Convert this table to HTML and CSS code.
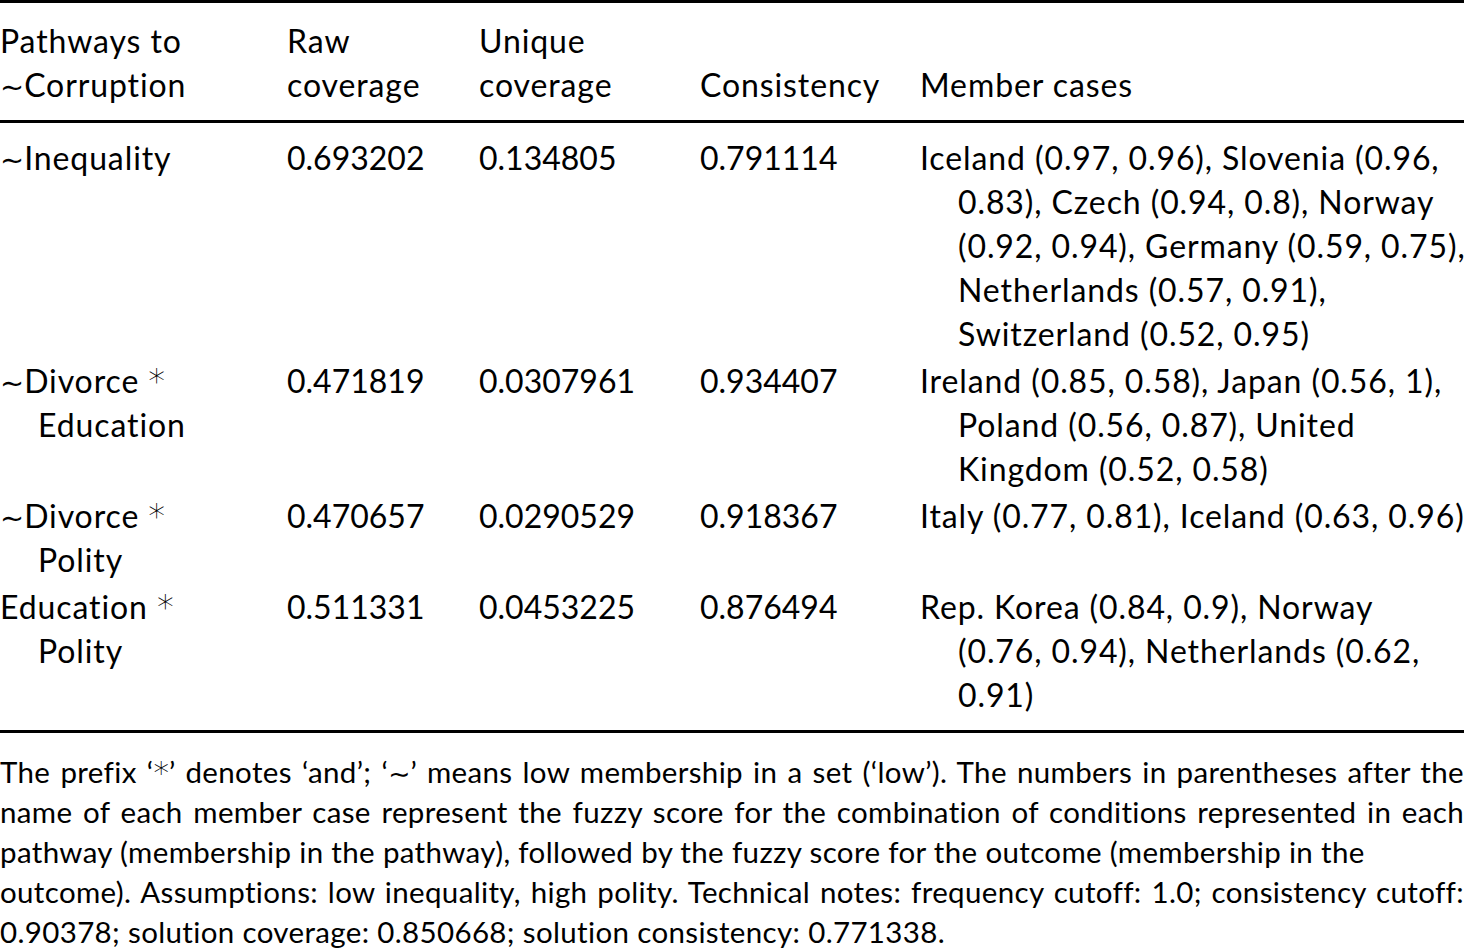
FILE: index.html
```html
<!DOCTYPE html>
<html lang="en">
<head>
<meta charset="utf-8">
<title>Pathways to ~Corruption</title>
<link rel="stylesheet" href="styles.css">
</head>
<body>
<div class="table-wrap">
  <table class="qca">
    <colgroup>
      <col class="c1"><col class="c2"><col class="c3"><col class="c4"><col class="c5">
    </colgroup>
    <thead>
      <tr>
        <th>Pathways to<br><span class="tl">∼</span>Corruption</th>
        <th>Raw<br>coverage</th>
        <th>Unique<br>coverage</th>
        <th>Consistency</th>
        <th>Member cases</th>
      </tr>
    </thead>
    <tbody>
      <tr>
        <td class="hang"><span class="tl">∼</span>Inequality</td>
        <td class="num">0.693202</td>
        <td class="num">0.134805</td>
        <td class="num">0.791114</td>
        <td class="hang cases">Iceland (0.97, 0.96), Slovenia (0.96,<br>0.83), Czech (0.94, 0.8), Norway<br>(0.92, 0.94), Germany (0.59, 0.75),<br>Netherlands (0.57, 0.91),<br>Switzerland (0.52, 0.95)</td>
      </tr>
      <tr>
        <td class="hang"><span class="tl">∼</span>Divorce <span class="ast">*</span><br>Education</td>
        <td class="num">0.471819</td>
        <td class="num">0.0307961</td>
        <td class="num">0.934407</td>
        <td class="hang cases">Ireland (0.85, 0.58), Japan (0.56, 1),<br>Poland (0.56, 0.87), United<br>Kingdom (0.52, 0.58)</td>
      </tr>
      <tr>
        <td class="hang"><span class="tl">∼</span>Divorce <span class="ast">*</span><br>Polity</td>
        <td class="num">0.470657</td>
        <td class="num">0.0290529</td>
        <td class="num">0.918367</td>
        <td class="hang cases">Italy (0.77, 0.81), Iceland (0.63, 0.96)</td>
      </tr>
      <tr>
        <td class="hang">Education <span class="ast">*</span><br>Polity</td>
        <td class="num">0.511331</td>
        <td class="num">0.0453225</td>
        <td class="num">0.876494</td>
        <td class="hang cases">Rep. Korea (0.84, 0.9), Norway<br>(0.76, 0.94), Netherlands (0.62,<br>0.91)</td>
      </tr>
    </tbody>
  </table>
  <p class="note">
    <span class="line full">The prefix ‘<span class="ast">*</span>’ denotes ‘and’; ‘<span class="tl">∼</span>’ means low membership in a set (‘low’). The numbers in parentheses after the</span>
    <span class="line full">name of each member case represent the fuzzy score for the combination of conditions represented in each</span>
    <span class="line">pathway (membership in the pathway), followed by the fuzzy score for the outcome (membership in the</span>
    <span class="line full">outcome). Assumptions: low inequality, high polity. Technical notes: frequency cutoff: 1.0; consistency cutoff:</span>
    <span class="line">0.90378; solution coverage: 0.850668; solution consistency: 0.771338.</span>
  </p>
</div>
</body>
</html>
```
FILE: styles.css
```css
html, body {
  margin: 0;
  padding: 0;
  background: #ffffff;
}
body {
  font-family: "Lato", "DejaVu Sans", sans-serif;
  font-size: 32px;
  color: #000000;
}
.table-wrap {
  width: 1464px;
}
.qca {
  width: 1464px;
  border-collapse: collapse;
  table-layout: fixed;
  border-top: 3px solid #000;
  border-bottom: 3px solid #000;
}
.c1 { width: 287px; }
.c2 { width: 192px; }
.c3 { width: 221px; }
.c4 { width: 220px; }
.c5 { width: 544px; }
.qca th,
.qca td {
  padding: 0;
  text-align: left;
  vertical-align: top;
  font-weight: 400;
  line-height: 44px;
  white-space: nowrap;
  letter-spacing: 0.9px;
}
.qca td.num {
  letter-spacing: 0;
}
.qca thead th {
  vertical-align: bottom;
  padding-top: 16px;
  padding-bottom: 13px;
  border-bottom: 3px solid #000;
}
.qca tbody td {
  padding-bottom: 3px;
}
.qca tbody tr:first-child td {
  padding-top: 13px;
}
.qca tbody tr:last-child td {
  padding-bottom: 13px;
}
.hang {
  padding-left: 38px !important;
  text-indent: -38px;
}
.tl {
  font-family: "DejaVu Sans", sans-serif;
  font-weight: 400;
  font-size: 0.9em;
  line-height: 0;
  letter-spacing: 0;
}
.ast {
  font-family: "DejaVu Sans", sans-serif;
  font-weight: 200;
  font-size: 1.05em;
  line-height: 0;
  letter-spacing: 0;
}
.note {
  margin: 0;
  padding-top: 19px;
  font-size: 29.5px;
  letter-spacing: 0.35px;
  line-height: 40px;
}
.note .line {
  display: block;
  white-space: nowrap;
}
.note .line.full {
  text-align: justify;
  text-align-last: justify;
}
```
